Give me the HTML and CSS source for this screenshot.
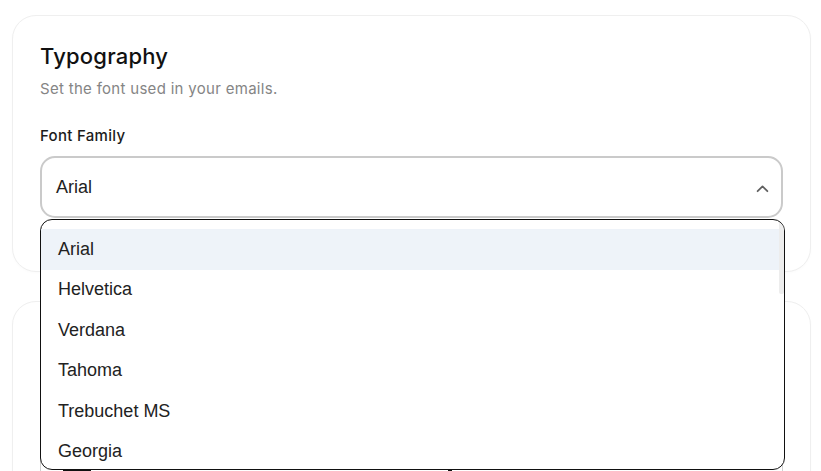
FILE: index.html
```html
<!DOCTYPE html>
<html lang="en">
<head>
<meta charset="utf-8">
<title>Typography</title>
<link rel="stylesheet" href="styles.css">
</head>
<body>
<div class="page">
  <section class="card card-first">
    <h2 class="card-title">Typography</h2>
    <p class="card-sub">Set the font used in your emails.</p>
    <div class="field-label">Font Family</div>
    <div class="select-wrap">
      <div class="select">
        <span class="select-value">Arial</span>
        <svg class="chev" width="12" height="8" viewBox="0 0 12 8"><path d="M1.5 6.5 L6 2 L10.5 6.5" fill="none" stroke="#5f5f5f" stroke-width="1.6" stroke-linecap="round" stroke-linejoin="round"/></svg>
      </div>
      <ul class="listbox">
        <li class="opt opt-active">Arial</li>
        <li class="opt">Helvetica</li>
        <li class="opt">Verdana</li>
        <li class="opt">Tahoma</li>
        <li class="opt">Trebuchet MS</li>
        <li class="opt">Georgia</li>
        <li class="thumb"></li>
      </ul>
    </div>
  </section>
  <section class="card card-second">
    <div class="preview-box">
      <span class="swatch swatch-a"></span>
      <span class="swatch swatch-b"></span>
    </div>
  </section>
</div>
</body>
</html>
```

FILE: styles.css
```css
* { box-sizing: border-box; }
html, body { margin: 0; padding: 0; background: #ffffff; }
body { font-family: Inter, "Noto Sans", sans-serif; color: #151515; overflow: hidden; height: 471px; }
.page { padding: 15px 10px 0 12px; display: flex; flex-direction: column; gap: 29px; }
.card {
  border: 1px solid #efefef;
  border-radius: 24px;
  background: #fff;
  padding: 26px 27px 53px 27px;
  box-shadow: 0 1px 3px rgba(0,0,0,0.02);
}
.card-title { margin: 0; font-size: 22px; line-height: 28px; font-weight: 500; color: #111; letter-spacing: 0.2px; }
.card-sub { margin: 9px 0 0; font-size: 15px; line-height: 20px; color: #858585; letter-spacing: 0.3px; }
.field-label { margin-top: 27px; font-size: 15px; line-height: 20px; font-weight: 500; color: #1c1c1c; letter-spacing: 0.3px; }
.select-wrap { position: relative; margin-top: 10px; }
.select {
  height: 62px;
  border: 2px solid #cacaca;
  border-radius: 15px;
  display: flex; align-items: center; justify-content: space-between;
  padding: 0 12px 0 14px;
  background: #fff;
}
.select-value { font-family: "Liberation Sans", Arial, sans-serif; font-size: 18px; color: #222; }
.chev { display: block; margin-top: 2px; width: 13px; height: 9px; }
.listbox {
  position: absolute; left: 0; top: 63px;
  width: 745px; height: 251px;
  margin: 0; padding: 9px 0 0; list-style: none;
  border: 1px solid #111;
  border-radius: 12px;
  background: #fff;
  overflow: hidden;
  z-index: 5;
}
.opt {
  height: 40.5px; display: flex; align-items: center;
  padding-left: 17px; margin-right: 5px;
  font-family: "Liberation Sans", Arial, sans-serif; font-size: 18px; color: #222;
}
.opt-active { background: #eef3f9; }
.thumb { position: absolute; right: 0; top: 2px; width: 5px; height: 72px; background: #ededed; border-radius: 2px; }
.card-second { padding: 137px 27px 40px 27px; }
.preview-box {
  height: 70px;
  border: 1px solid #d0d0d0;
  border-radius: 12px;
  position: relative;
}
.swatch { position: absolute; top: 27px; height: 10px; background: #111; }
.swatch-a { left: 22px; width: 28px; }
.swatch-b { left: 407px; width: 4px; }
```
